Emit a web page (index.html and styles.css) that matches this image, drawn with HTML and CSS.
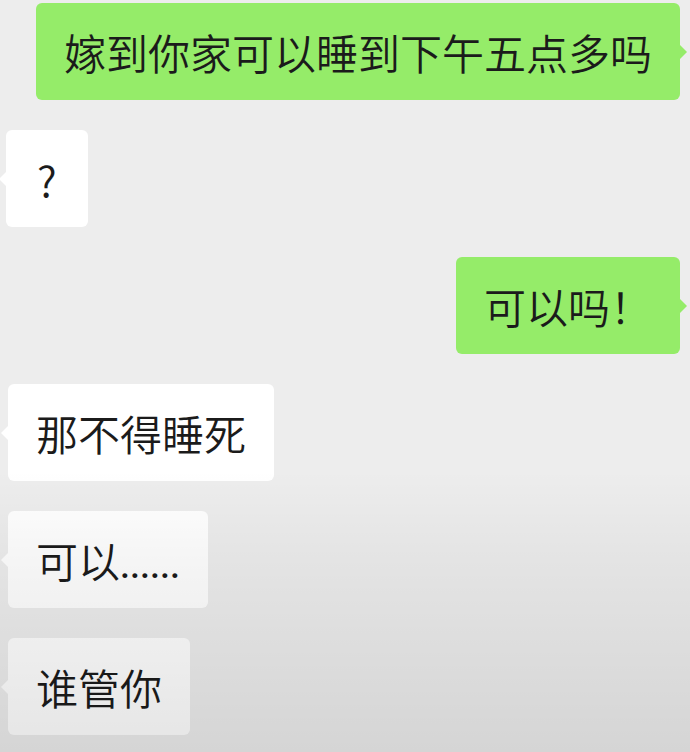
FILE: index.html
```html
<!DOCTYPE html>
<html lang="zh-CN">
<head>
<meta charset="utf-8">
<link rel="stylesheet" href="styles.css">
</head>
<body>
<div class="chat">
  <div class="row sent"><div class="bubble green">嫁到你家可以睡到下午五点多吗</div></div>
  <div class="row recv first"><div class="bubble white">?</div></div>
  <div class="row sent"><div class="bubble green">可以吗！</div></div>
  <div class="row recv"><div class="bubble white">那不得睡死</div></div>
  <div class="row recv"><div class="bubble white">可以<span class="dots">......</span></div></div>
  <div class="row recv"><div class="bubble white">谁管你</div></div>
</div>
<div class="shade"></div>
</body>
</html>
```
FILE: styles.css
```css
html, body {
  margin: 0;
  padding: 0;
}
body {
  width: 690px;
  height: 752px;
  overflow: hidden;
  background: #ededed;
  font-family: "Noto Sans CJK SC", "Noto Sans", sans-serif;
  font-weight: 350;
  color: #1b1b1b;
  position: relative;
}
.chat {
  display: flex;
  flex-direction: column;
  gap: 30px;
  padding-top: 3px;
}
.row {
  display: flex;
}
.row.sent {
  justify-content: flex-end;
  padding-right: 10px;
}
.row.recv {
  justify-content: flex-start;
  padding-left: 8px;
}
.row.recv.first {
  padding-left: 6px;
}
.bubble {
  position: relative;
  font-size: 42px;
  line-height: 41px;
  padding: 28px 28px;
  border-radius: 6px;
  white-space: nowrap;
}
.green {
  background: #95ec69;
}
.white {
  background: #ffffff;
}
.row.recv.first .white {
  padding-left: 31px;
  padding-right: 31px;
}
.green::after {
  content: "";
  position: absolute;
  right: -7px;
  top: 50%;
  margin-top: -7px;
  border-style: solid;
  border-width: 7px 0 7px 7px;
  border-color: transparent transparent transparent #95ec69;
}
.white::before {
  content: "";
  position: absolute;
  left: -7px;
  top: 50%;
  margin-top: -7px;
  border-style: solid;
  border-width: 7px 7px 7px 0;
  border-color: transparent #ffffff transparent transparent;
}
.dots {
  font-family: Roboto, sans-serif;
  font-weight: 500;
  font-size: 36px;
  line-height: 0;
}
.shade {
  position: absolute;
  left: 0;
  top: 0;
  width: 690px;
  height: 752px;
  pointer-events: none;
  background: linear-gradient(to bottom, rgba(0,0,0,0) 0px, rgba(0,0,0,0) 470px, rgba(0,0,0,0.04) 560px, rgba(0,0,0,0.1) 752px);
}
```
